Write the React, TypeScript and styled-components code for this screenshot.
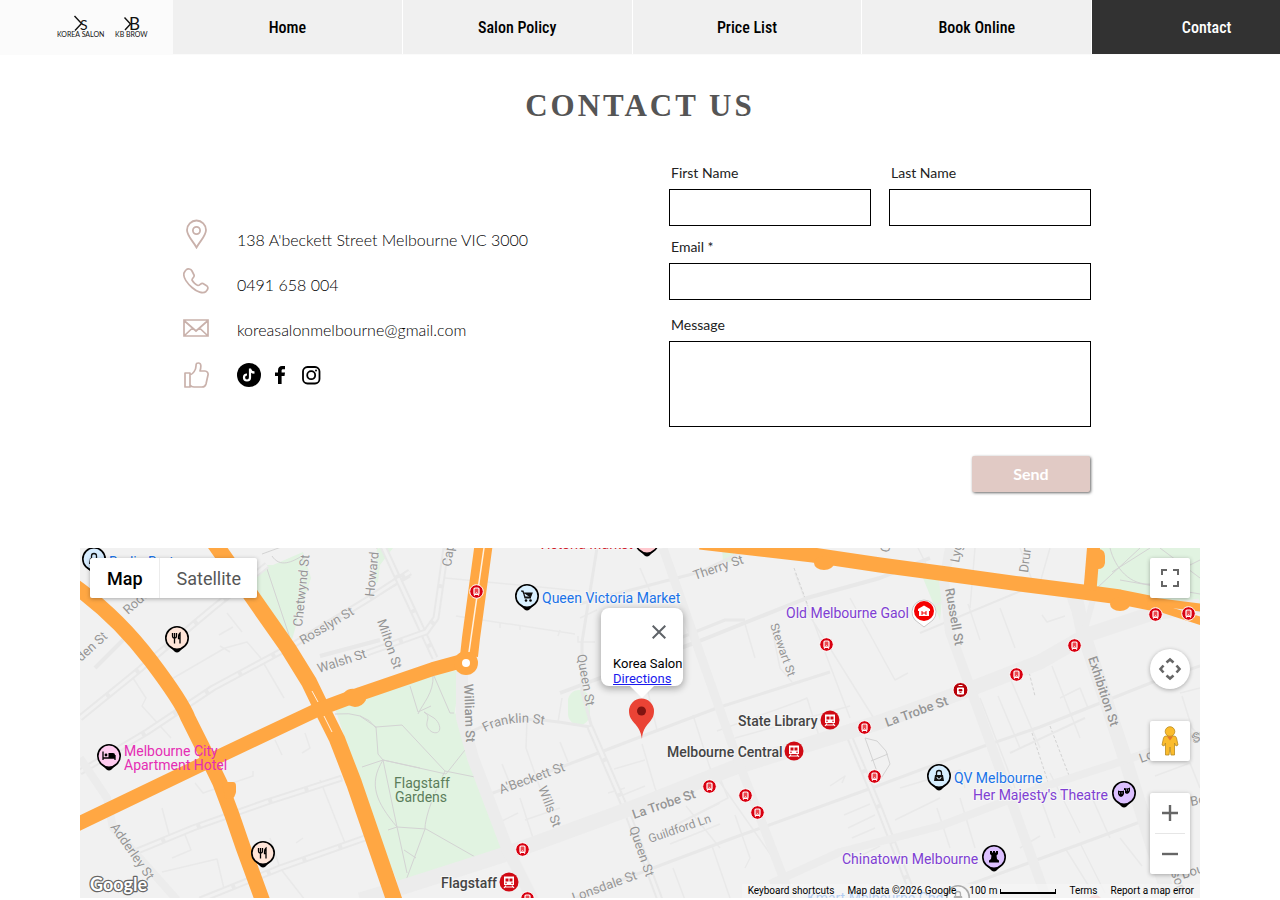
import React from "react";
import styled, { createGlobalStyle, css } from "styled-components";

const GlobalStyle = createGlobalStyle`
  * { box-sizing: border-box; }
  body { margin: 0; background: #fff; font-family: Lato, "Liberation Sans", sans-serif; }
`;

/* ---------- header ---------- */

const Header = styled.header`
  display: flex;
  height: 55px;
  overflow: hidden;
`;

const LogoLink = styled.a`
  flex: 0 0 173px;
  background: #fbfbfb;
`;

const Nav = styled.nav`
  flex: 1 1 0;
  min-width: 0;
  overflow: hidden;
  background: #fbfbfb;
`;

const NavList = styled.ul`
  display: flex;
  width: 100%;
  min-width: 1148px;
  margin: 0;
  padding: 0;
  list-style: none;
`;

const NavItem = styled.li`
  flex: 1 1 0;
  & + & { border-left: 1px solid #fff; }
`;

const NavLink = styled.a<{ $active?: boolean }>`
  display: flex;
  align-items: center;
  justify-content: center;
  height: 54px;
  font: 500 16px "Liberation Sans Narrow", "Roboto Condensed", Roboto, sans-serif;
  text-decoration: none;
  color: ${(p) => (p.$active ? "#fff" : "#000")};
  background: ${(p) => (p.$active ? "#323232" : "#f0f0f0")};
`;

/* ---------- contact section ---------- */

const Title = styled.h1`
  margin: 31px 0 0;
  text-align: center;
  font: 700 31px/40px "Liberation Serif", serif;
  letter-spacing: 3px;
  color: #555;
`;

const Contact = styled.section`
  display: flex;
  justify-content: space-between;
  gap: 40px;
  max-width: 980px;
  margin: 37px auto 0;
  padding: 0 39px 0 33px;
`;

const Details = styled.div`
  display: flex;
  gap: 28px;
`;

const IconColumn = styled.div`
  display: flex;
  flex-direction: column;
  width: 26px;
  padding-top: 47px;
`;

const IconSlot = styled.div`
  display: flex;
  align-items: center;
  justify-content: center;
  height: 47px;
`;

const TextColumn = styled.div`
  display: flex;
  flex-direction: column;
  padding-top: 54px;
`;

const TextSlot = styled.div`
  display: flex;
  align-items: center;
  gap: 7px;
  height: 45px;
  font-size: 16px;
  font-weight: 300;
  color: #000;
  white-space: nowrap;
`;

const MailLink = styled.a`
  color: inherit;
  text-decoration: none;
`;

const SocialLink = styled.a`
  display: block;
  width: 24px;
  height: 24px;
  color: #000;
`;

const Form = styled.form`
  display: flex;
  flex-direction: column;
  flex: 0 1 422px;
`;

const NameRow = styled.div`
  display: grid;
  grid-template-columns: 1fr 1fr;
  gap: 18px;
`;

const Field = styled.div<{ $gap?: number }>`
  display: flex;
  flex-direction: column;
  gap: 6px;
  margin-top: ${(p) => p.$gap ?? 0}px;
`;

const Label = styled.label`
  padding-left: 2px;
  font-size: 14px;
  line-height: 20px;
  color: #222;
`;

const control = css`
  width: 100%;
  padding: 4px 10px;
  border: 1px solid #000;
  border-radius: 0;
  background: #fff;
  font: 14px Lato, sans-serif;
`;

const Input = styled.input`
  ${control}
  height: 37px;
`;

const TextArea = styled.textarea`
  ${control}
  display: block;
  height: 86px;
  resize: none;
`;

const SendButton = styled.button`
  align-self: flex-end;
  width: 118px;
  height: 36px;
  margin: 29px 1px 0 0;
  padding: 0 0 2px;
  border: 0;
  border-radius: 2px;
  background: #e1cac5;
  box-shadow: 1px 1px 3px rgba(0, 0, 0, 0.6);
  color: #fff;
  font: 700 16px Lato, sans-serif;
`;

/* ---------- map ---------- */

const MapFrame = styled.section`
  position: relative;
  height: 350px;
  margin: 56px 80px 2px;
  overflow: hidden;
  background: #f1f1f1;
  font-family: Roboto, sans-serif;
`;

const MapCanvas = styled.svg`
  display: block;
  width: 100%;
  height: 100%;
  font-family: Roboto, sans-serif;
`;

const floating = css`
  border: 0;
  background: #fff;
  box-shadow: 0 1px 4px rgba(0, 0, 0, 0.3);
`;

const MapTypes = styled.div`
  ${floating}
  position: absolute;
  top: 10px;
  left: 10px;
  display: flex;
  border-radius: 2px;
`;

const TypeButton = styled.button<{ $active?: boolean }>`
  height: 40px;
  padding: 0 16px 0 17px;
  border: 0;
  background: transparent;
  font: ${(p) => (p.$active ? 500 : 400)} 18px Roboto, sans-serif;
  color: ${(p) => (p.$active ? "#000" : "#565656")};
  & + & { border-left: 1px solid #ececec; }
`;

const Controls = styled.div`
  position: absolute;
  top: 10px;
  right: 10px;
  display: flex;
  flex-direction: column;
  gap: 32px;
`;

const ControlButton = styled.button<{ $round?: boolean; $spaced?: boolean }>`
  ${floating}
  display: flex;
  align-items: center;
  justify-content: center;
  width: 40px;
  height: 40px;
  padding: 0;
  margin-top: ${(p) => (p.$spaced ? 19 : 0)}px;
  border-radius: ${(p) => (p.$round ? "50%" : "2px")};
`;

const ZoomGroup = styled.div`
  ${floating}
  display: flex;
  flex-direction: column;
  align-items: center;
  border-radius: 2px;
`;

const ZoomButton = styled.button`
  display: flex;
  align-items: center;
  justify-content: center;
  width: 40px;
  height: 40px;
  padding: 0;
  border: 0;
  background: transparent;
`;

const ZoomRule = styled.div`
  width: 30px;
  height: 1px;
  background: #e6e6e6;
`;

const InfoWindow = styled.div`
  position: absolute;
  top: 60px;
  left: calc(50% - 39px);
  width: 82px;
  height: 78px;
  border-radius: 8px;
  background: #fff;
  box-shadow: 0 2px 7px 1px rgba(0, 0, 0, 0.3);
  font-size: 13px;
  line-height: 15px;
  color: #000;
  white-space: nowrap;
  &::after {
    content: "";
    position: absolute;
    top: 100%;
    left: 29px;
    border: 12px solid transparent;
    border-top-color: #fff;
    border-bottom: 0;
  }
`;

const CloseButton = styled.button`
  display: flex;
  align-items: center;
  justify-content: center;
  width: 48px;
  height: 48px;
  margin-left: auto;
  padding: 0;
  border: 0;
  background: transparent;
`;

const InfoBody = styled.div`
  padding-left: 12px;
`;

const InfoLink = styled.a`
  color: #1a1aee;
`;

const Attribution = styled.div`
  position: absolute;
  right: 0;
  bottom: 0;
  display: flex;
  align-items: center;
  gap: 13px;
  height: 14px;
  padding: 0 6px;
  background: rgba(245, 245, 245, 0.7);
  font-size: 10px;
  line-height: 14px;
  color: #000;
`;

const AttributionButton = styled.button`
  display: flex;
  align-items: center;
  gap: 3px;
  padding: 0;
  border: 0;
  background: transparent;
  font: 10px/14px Roboto, sans-serif;
  color: #000;
`;

const AttributionLink = styled.a`
  color: #000;
  text-decoration: none;
`;

const ScaleBar = styled.span`
  width: 56px;
  height: 5px;
  border: 2px solid #000;
  border-width: 0 1px 2px;
`;

/* ---------- map data ---------- */

const parks = [
  "M255 160 280 152 353 127 380 122 375 164 387 197 397 230 424 300 320 340 305 304 280 237z",
  "M177 24 187 17 193 17 223 4 231 30 217 74 212 92 177 47z",
  "M297 0H313L300 17 298 34 294 36z",
  "M843 30 864 32 860 72z",
  "M642 0 655 3 652 14 643 14z",
  "M993 52 1000 54 998 67z",
  "M1015 44 1020 0H1120V56z",
];

const parkPaths = [
  "M330 138 338 164 351 158M353 127C354 145 343 155 338 166M354 128 370 165 374 165",
  "M280 168 296 179 322 177 365 223 395 229M282 219 303 212 366 226 385 202M296 179 298 206 303 212 340 220",
  "M303 212C288 236 296 254 317 279L308 282M365 223C352 250 345 270 345 281L325 335M303 212 317 279 346 281 397 310M317 279 327 325M324 302 336 310",
  "M344 164C354 170 340 176 352 184C362 188 362 176 354 170z",
  "M186 18 210 90M182 6 204 -2M192 8C200 20 212 14 222 8",
  "M255 166Q285 163 296 180",
  "M1017 40 1060 0M1030 0C1035 20 1050 38 1072 36L1120 12M1032 24 1070 0M1040 32 1120 46M1080 0 1120 30",
];

const wideRoads: [string, number][] = [
  ["M280 352 320 340 423 307 560 257 653 220 800 174 893 140 960 114 1007 87 1073 65 1120 58", 15],
  ["M382 124 382 170 393 210 427 300 453 352", 12],
  ["M870 0 864 33 870 84 910 194 967 352", 10],
  ["M996 50 1003 84 1043 204 1070 290 1090 352", 14],
  ["M583 0 617 97 657 210 712 352", 9],
  ["M0 210 27 250 33 280 97 352", 8],
  ["M690 336 760 304 860 278 960 240 1040 214 1120 186", 8],
  ["M988 44 1014 48 1003 88z", 6],
];

const doubleRoads = [
  "M0 170 53 127 133 60 187 17",
  "M0 224 67 184 133 140 213 97 290 50 330 24",
  "M50 306 113 280 187 254 262 230",
  "M120 352 200 320 285 290",
  "M302 -4 355 110",
  "M287 105 346 84 356 70 366 0",
  "M510 179 547 264 580 352",
  "M770 190 800 262 835 352",
];

const narrowRoads: [string, number][] = [
  ["M405 248 513 207 560 189 637 160 750 124", 3],
  ["M390 184C420 170 440 166 510 179", 3],
  ["M517 0 502 94 502 144 512 180", 3],
  ["M500 56 520 50 620 24 660 5", 3],
  ["M480 145 560 115 617 94 727 50 800 30 850 10", 4],
  ["M560 98 600 90 645 72 665 72", 3],
  ["M490 352 520 340 653 290 800 237 907 197 960 179 1073 134 1120 118", 3],
  ["M880 340 943 317 1060 274", 3],
  ["M240 108 300 92", 4],
  ["M15 120 45 90", 4],
  ["M275 60 330 28", 3],
  ["M840 85 960 35M960 35 1010 52", 2],
  ["M1005 170 930 205", 2],
];

const lanes = [
  "M53 130 66 150 62 158 91 190M147 65 162 84M139 87 153 79M90 132 145 100 167 94 180 109 204 150M150 104 140 98",
  "M82 260 90 290M104 284 111 302 92 310M82 324 137 311 145 345M195 192 202 207M225 185 230 200 222 205M115 235 123 245 173 228V223",
  "M240 232 265 295M216 295 223 290M190 290 200 320 225 352",
  "M365 30 470 40 500 43M376 68 495 86M420 75V80M440 77V82M480 82 478 88M498 88V94H515",
  "M447 172 446 200 460 240M482 150 478 174M480 194 488 214M422 216 430 236M440 250 453 290M445 272 480 260M438 265 420 274",
  "M560 20 575 55M500 70 517 62M560 110 577 182M534 221 565 212M562 196 575 240 585 262M543 247 565 238M528 245 545 240",
  "M613 167 630 220 700 320M637 183 720 153 727 150 739 188M665 76 675 110M691 76 700 120 712 134M655 190 770 158M595 277 648 250 640 230M580 285 640 255M590 296 640 276",
  "M606 258 640 300M655 267 670 310 665 320M632 298 650 350M593 320 605 352M740 190 800 170M715 25 770 170M726 62 800 180M770 50 815 132 828 125M838 0 848 20M850 60 870 50",
  "M750 238 765 228 762 235M764 267 790 256M768 280 795 267M772 290 795 280M776 310 800 298M820 240 880 222 885 240M815 272 860 250M857 260 870 300M880 250 895 300",
  "M888 56 900 92M895 0 890 60M920 60 935 100M900 150 935 240M918 148 940 200M930 130 960 200M955 40 940 0M970 0 960 35",
  "M972 118 1000 190M980 150 1000 140 1008 160M962 67 967 74 985 68M955 235 975 290M970 225 1000 285M985 300 1010 340M1000 295 1025 345M1010 245 1030 290M1040 290 1062 318M1075 228 1110 215 1120 240M1100 145 1120 140M1102 148 1112 180 1120 188M940 300 960 288",
];

const dashedPaths = [
  "M952 185 970 240M970 178 990 230M948 120 955 148",
  "M714 20 728 58",
];

const arterials: [string, number][] = [
  ["M-8 36 0 42Q40 72 71 113T108 170L124 202 140 235 152 267 163 299 186 362", 15],
  ["M128 -14 173 50 208 100 229 134 243 163 257 191 274 235 317 360", 16],
  ["M-4 277 127 214 237 162 280 146 353 121 386 112", 14],
  ["M389 108 391 90 404 -6", 18],
  ["M620 -6 733 7 800 17 867 26 940 36 1003 44 1040 49 1075 56", 15],
  ["M1068 53 1124 60", 8],
  ["M1068 56 1124 74", 8],
  ["M1010 42 1014 -6", 13],
];

type Street = [text: string, x: number, y: number, angle: number, size: number, weight?: number];

const streets: Street[] = [
  ["Roden St", 48, 67, -42, 13],
  ["den St", 1, 114, -42, 13],
  ["Chetwynd St", 222, 79, -84, 13],
  ["Howard St", 294, 49, -84, 13],
  ["Rosslyn St", 223, 97, -31, 13],
  ["Walsh St", 239, 125, -18, 13],
  ["Milton St", 297, 73, 71, 13],
  ["Capel St", 371, 19, -82, 13],
  ["William St", 384, 136, 88, 13, 500],
  ["Queen St", 497, 107, 80, 13],
  ["A'Beckett St", 421, 246, -20, 13],
  ["Wills St", 458, 240, 69, 13],
  ["Therry St", 615, 32, -19, 13],
  ["Stewart St", 690, 77, 71, 12],
  ["La Trobe St", 554, 271, -19, 13, 500],
  ["Guildford Ln", 570, 295, -19, 12],
  ["Queen St", 549, 280, 71, 13],
  ["Lonsdale St", 494, 354, -20, 13],
  ["Russell St", 865, 41, 80, 13, 500],
  ["Lygon St", 879, 15, -80, 13],
  ["Drummond St", 948, 25, -83, 13],
  ["Cardigan St", 809, 5, -80, 13],
  ["La Trobe St", 807, 179, -20, 13, 500],
  ["Exhibition St", 1008, 110, 72, 13, 500],
  ["Lonsdale St", 1061, 215, -20, 13],
  ["St", 1113, 194, -6, 13],
  ["Bourke", 1111, 258, -10, 13],
  ["Bourke", 1103, 331, -18, 13],
  ["Swanson", 1080, 295, 70, 13],
  ["Adderley St", 30, 279, 55, 13],
];

type Place = [text: string, x: number, y: number, fill: string, weight?: number];

const BLUE = "#1a73e8";
const PURPLE = "#7f3fd3";
const DARK = "#444";
const PINK = "#e52db4";

const places: Place[] = [
  ["Berlin Bart", 29, 19, BLUE],
  ["Victoria Market", 458, 1, "#d0202a"],
  ["Queen Victoria Market", 462, 55, BLUE],
  ["Old Melbourne Gaol", 706, 70, PURPLE],
  ["State Library", 658, 178, DARK, 500],
  ["Melbourne Central", 587, 209, DARK, 500],
  ["Flagstaff", 361, 340, DARK, 500],
  ["QV Melbourne", 874, 235, BLUE],
  ["Her Majesty's Theatre", 893, 252, PURPLE],
  ["Chinatown Melbourne", 762, 316, PURPLE],
];

const hotelLines: Place[] = [
  ["Melbourne City", 44, 208, PINK],
  ["Apartment Hotel", 44, 222, PINK],
];

const tramStops = [
  [396, 43], [442, 301], [447, 350], [746, 96], [784, 179], [794, 228], [629, 238],
  [665, 247], [677, 264], [936, 126], [994, 97], [1075, 66], [1108, 65],
];

const stations = [[429, 334], [750, 172], [714, 203]];

const glyphs: Record<string, React.ReactNode> = {
  fork: (
    <path d="M-4.500 -5V-2Q-4.500 0 -2.500 0V5.500M-2.500 -5V0M-.5 -5V-2Q-.5 0 -2.500 0M3 5.500V-5Q1.500 -4 1.500 -1V.5H3" fill="none" stroke="#000" strokeWidth="1.300" />
  ),
  bed: (
    <g>
      <path d="M-6-4.500V4M-6 2H6V4M6 2V-1" stroke="#000" strokeWidth="1.300" fill="none" />
      <path d="M-.5-3H4Q6-3 6-1V2H-.5z" />
      <circle cx="-3" cy="-1" r="1.400" />
    </g>
  ),
  cart: (
    <g>
      <path d="M-6-5H-4L-2 2H4M-3.500-3H5L3.500 1H-2z" fill="#111" stroke="#111" strokeWidth="1.200" />
      <circle cx="-1" cy="4.500" r="1.300" /><circle cx="3.500" cy="4.500" r="1.300" />
    </g>
  ),
  bag: (
    <g>
      <path d="M-4-1H4L5 5H-5z" fill="#111" />
      <path d="M-2.500-1V-3A2.500 2.500 0 0 1 2.500-3V-1" fill="none" stroke="#111" strokeWidth="1.300" />
      <path d="M-2 1A2 2 0 0 0 2 1" fill="none" stroke="#dff1ff" strokeWidth="1" />
    </g>
  ),
  rook: <path d="M-4-6H-2V-4.500H-1V-6H1V-4.500H2V-6H4V-3L2.500-1.500 3 2 5 3.500V5.500H-5V3.500L-3 2-2.500-1.500-4-3z" />,
  masks: (
    <g>
      <path d="M-6-2.500Q-3-1.500 0-2.500V1Q-1 4-3 4Q-5 4-6 1z" />
      <path d="M0-5Q3-4 6-5.500V-2Q5 1 3 1L1 0 1-3H0z" />
      <path d="M-5 0H-4M-2.500 0H-1.500M2-3H3M4-3H5" stroke="#dcc0ff" />
    </g>
  ),
};

const Pin = ({ x, y, fill, glyph, opacity = 1 }: { x: number; y: number; fill: string; glyph?: string; opacity?: number }) => (
  <g transform={`translate(${x} ${y})`} opacity={opacity}>
    <path d="M-9 7 -2.500 13.500Q0 15.500 2.500 13.500L9 7z" />
    <circle r="11.200" fill={fill} stroke="#000" strokeWidth="1.600" />
    {glyph && glyphs[glyph]}
  </g>
);

const Tram = ({ x, y }: { x: number; y: number }) => (
  <g transform={`translate(${x + 0.5} ${y + 0.5})`}>
    <circle r="6.800" fill="#d80010" stroke="#fff" />
    <rect x="-2.500" y="-3.500" width="5" height="6.500" rx="1" fill="#ec4a50" stroke="#fff" strokeWidth="1.200" />
    <path d="M-2.500 4.500 0 1 2.500 4.500" stroke="#fff" fill="none" strokeWidth=".8" />
  </g>
);

const Station = ({ x, y }: { x: number; y: number }) => (
  <g transform={`translate(${x} ${y})`}>
    <circle r="9.500" fill="#d00a14" />
    <path d="M-5-5.500H5V3H-5z" fill="#fff" />
    <path d="M-3.500-3.500H-.5V-.5H-3.500zM.5-3.500H3.500V-.5H.5z" fill="#d00a14" />
    <circle cx="-3" cy="1.200" r=".8" fill="#d00a14" /><circle cx="3" cy="1.200" r=".8" fill="#d00a14" />
    <path d="M-5 6 -3 3.500M5 6 3 3.500M-4 5H4" stroke="#fff" strokeWidth="1.200" />
  </g>
);

const MapDrawing = () => (
  <MapCanvas viewBox="0 0 1120 350" preserveAspectRatio="xMidYMid slice" role="img" aria-label="Map of Melbourne">
    <rect width="1120" height="350" fill="#f1f1f1" />
    <g fill="#e1f3e1">
      {parks.map((d) => <path key={d} d={d} />)}
      <rect x="488" y="142" width="22" height="35" rx="11" />
    </g>
    <g fill="none" stroke="#d3d3d3">
      {parkPaths.map((d) => <path key={d} d={d} />)}
      <path d="M785 190 797 193 806 203 810 216 800 232 785 190M791 213 808 206" />
    </g>
    <g fill="none" strokeLinejoin="round">
      {lanes.map((d) => <path key={d} d={d} stroke="#e9e9e9" strokeWidth="1.500" />)}
      {dashedPaths.map((d) => <path key={d} d={d} stroke="#d2d2d2" strokeDasharray="3 2" />)}
      {narrowRoads.map(([d, w]) => <path key={d} d={d} stroke="#e8e8e8" strokeWidth={w} />)}
      {doubleRoads.map((d) => (
        <g key={d}>
          <path d={d} stroke="#e8e8e8" strokeWidth="7" />
          <path d={d} stroke="#f1f1f1" strokeWidth="3" strokeDasharray="34 4" />
        </g>
      ))}
      {wideRoads.map(([d, w]) => <path key={d} d={d} stroke="#ececec" strokeWidth={w} />)}
      {arterials.map(([d, w]) => <path key={d} d={d} stroke="#ffa743" strokeWidth={w} />)}
    </g>
    <g fill="#ffa743">
      <path d="M142 234H153Q156 234 156 238V244Q155 249 152 251L145 250z" />
      <path d="M264 145Q268 140 275 141H283L286 152Q282 159 275 159 268 158 265 154z" />
      <ellipse cx="744" cy="15" rx="10" ry="7" />
      <ellipse cx="1040" cy="56" rx="10" ry="7" />
      <path d="M1012 1H1019Q1025 2 1025 8V15Q1024 21 1018 21H1012z" />
      <circle cx="386" cy="115" r="12" />
    </g>
    <circle cx="386" cy="115" r="4" fill="#fff" />
    <path d="M389 104 391 90 404 0" stroke="#fff1e0" strokeWidth="1.500" fill="none" />
    <path d="M232 143 238 154M244 168 252 184" stroke="#fff1e0" fill="none" />

    <g fill="#969696" stroke="#f3f3f3" strokeWidth="1" paintOrder="stroke">
      {streets.map(([text, x, y, angle, size, weight]) => (
        <text key={`${text}${x}`} transform={`translate(${x} ${y}) rotate(${angle})`} fontSize={size} fontWeight={weight ?? 400}>
          {text}
        </text>
      ))}
      <path id="franklin" d="M405 184Q432 169 470 178" fill="none" stroke="none" />
      <text fontSize="13"><textPath href="#franklin">Franklin St</textPath></text>
    </g>

    {tramStops.map(([x, y]) => <Tram key={`${x}-${y}`} x={x} y={y} />)}
    <g transform="translate(880.500 142)">
      <circle r="7.500" fill="#b80008" stroke="#fff" />
      <path d="M-3-2H3V4H-3zM-2-4.500H2" fill="#fff" stroke="#fff" />
      <path d="M-1.500-.5H1.500V1H-1.500zM-1 2.500H1" fill="#b80008" stroke="#b80008" strokeWidth=".8" />
    </g>
    <circle cx="1015" cy="354" r="7" fill="#f0a0a0" />
    {stations.map(([x, y]) => <Station key={`${x}-${y}`} x={x} y={y} />)}

    <g stroke="#f6f6f6" strokeWidth="2" paintOrder="stroke" fontSize="14">
      {places.map(([text, x, y, fill, weight]) => (
        <text key={text} x={x} y={y} fill={fill} fontWeight={weight ?? 400}>{text}</text>
      ))}
      <text x="727" y="355" fill={BLUE}>Kmart Melbourne Cbd</text>
      <g fill="#5b7d5b" stroke="#e1f3e1" textAnchor="middle">
        <text x="342" y="240">Flagstaff</text>
        <text x="341" y="254">Gardens</text>
      </g>
    </g>
    <g fontSize="14">
      {hotelLines.map(([text, x, y, fill]) => <text key={text} x={x} y={y} fill={fill}>{text}</text>)}
    </g>

    <Pin x={14} y={11} fill="#d6ecff" glyph="bag" />
    <Pin x={97} y={90} fill="#ffe5d8" glyph="fork" />
    <Pin x={29} y={208} fill="#ffccf0" glyph="bed" />
    <Pin x={183} y={305} fill="#ffe5d8" glyph="fork" />
    <Pin x={447} y={48} fill="#d9f0ff" glyph="cart" />
    <Pin x={567} y={-6} fill="#ffc9cf" />
    <Pin x={859} y={228} fill="#d6eeff" glyph="bag" />
    <Pin x={914} y={309} fill="#dcc0ff" glyph="rook" />
    <Pin x={1044} y={245} fill="#dcc0ff" glyph="masks" />
    <Pin x={878} y={349} fill="#fff" glyph="bag" />

    <g transform="translate(844 64)">
      <path d="M0 15 -9 8A12 12 0 1 1 9 8z" fill="#fff" stroke="#bbb" strokeWidth=".8" />
      <circle cy="-1" r="10" fill="#f40000" />
      <path d="M-6-3 0-6.500 6-3V-1H5V4H-5V-1H-6z" fill="#fff" />
      <path d="M-2-1V3M0 1H0M2-1V3M-2 1H2" stroke="#f40000" />
    </g>

    <path d="M562 191C560 175 549 175 549 163A12.500 12.500 0 0 1 574 163C574 175 563 175 562 191z" fill="#ea4335" />
    <circle cx="561.500" cy="163" r="4.500" fill="#811411" />

    <text x="10" y="343" fontFamily="Lato, sans-serif" fontSize="18" fontWeight="700" fill="#fff" stroke="#666" strokeWidth="2.500" strokeLinejoin="round" paintOrder="stroke">
      Google
    </text>
  </MapCanvas>
);

/* ---------- line icons ---------- */

const ROSE = "#c9b1ab";

const contactIcons = [
  <svg key="pin" width="24" height="30" viewBox="0 0 24 30" fill="none" stroke={ROSE} strokeWidth="1.800">
    <path d="M12.500 28.500C9 22 3 17 3 11A9.500 9.500 0 0 1 22 11C22 17 16 22 12.500 28.500z" /><circle cx="12.500" cy="11.500" r="3.600" />
  </svg>,
  <svg key="phone" width="26" height="26" viewBox="0 0 26 26" fill="none" stroke={ROSE} strokeWidth="1.700" strokeLinejoin="round">
    <path d="M3 2C5 0 8 1 9 3L11 7C12 9 9 10 9 12C10 14 13 17 15 17.500C17 17.500 18 14.500 20 15.500L24 18C26 20 24.500 22 23 23.500C20 26 14 24 9 19.500C4 15 0 9 1 5C1.500 4 2 3 3 2z" />
  </svg>,
  <svg key="mail" width="26" height="18" viewBox="0 0 26 18" fill="none" stroke={ROSE} strokeWidth="1.700">
    <path d="M1 1H25V17H1zM1 1.500 13 12 25 1.500M1 17 9.500 9M25 17 16.500 9" />
  </svg>,
  <svg key="like" width="26" height="26" viewBox="0 0 26 26" fill="none" stroke={ROSE} strokeWidth="1.700" strokeLinejoin="round">
    <path d="M2 11H7V25H2zM7 13C10 12 13 8 13 4C13 1 14 1 15.500 1C18 1 18.500 4 17 9H22C24 9 25.500 11 25 13L23 22C22.500 24 21 25 19 25H11Q8 25 7 23" />
  </svg>,
];

const Logo = () => (
  <svg width="173" height="55" viewBox="0 0 173 55" fill="#111" fontFamily="Lato, sans-serif">
    <path d="M74.500 16 81.500 23.500 75 30.500M124.500 17.500 130.500 24 125 30" stroke="#111" strokeWidth="1.400" fill="none" />
    <text x="80" y="30" fontSize="14">S</text>
    <text x="129" y="30" fontSize="17">B</text>
    <text x="57" y="37" fontSize="7">KOREA SALON</text>
    <text x="115" y="37" fontSize="7">KB BROW</text>
  </svg>
);

const navItems = ["Home", "Salon Policy", "Price List", "Book Online", "Contact"];

export default function App() {
  return (
    <>
      <GlobalStyle />
      <Header>
        <LogoLink href="#" aria-label="Korea Salon"><Logo /></LogoLink>
        <Nav>
          <NavList>
            {navItems.map((name) => (
              <NavItem key={name}><NavLink href="#" $active={name === "Contact"}>{name}</NavLink></NavItem>
            ))}
          </NavList>
        </Nav>
      </Header>

      <main>
        <Title>CONTACT US</Title>
        <Contact>
          <Details>
            <IconColumn>
              {contactIcons.map((icon) => <IconSlot key={icon.key}>{icon}</IconSlot>)}
            </IconColumn>
            <TextColumn>
              <TextSlot>138 A'beckett Street Melbourne VIC 3000</TextSlot>
              <TextSlot>0491 658 004</TextSlot>
              <TextSlot><MailLink href="mailto:koreasalonmelbourne@gmail.com">koreasalonmelbourne@gmail.com</MailLink></TextSlot>
              <TextSlot>
                <SocialLink href="#" aria-label="TikTok">
                  <svg width="24" height="24" viewBox="0 0 24 24">
                    <circle cx="12" cy="12" r="12" />
                    <path d="M13 5.500V14.500A3 3 0 1 1 10 11.500M13 6C13.500 8.500 15 9.500 17.500 9.700" fill="none" stroke="#fff" strokeWidth="2.200" />
                  </svg>
                </SocialLink>
                <SocialLink href="#" aria-label="Facebook">
                  <svg width="24" height="24" viewBox="0 0 24 24">
                    <path d="M10 21V13H7V9.500H10V7.500C10 4.500 11.500 3 14 3H17V6.300H15C14 6.300 13.600 6.800 13.600 7.800V9.500H17L16.500 13H13.600V21z" />
                  </svg>
                </SocialLink>
                <SocialLink href="#" aria-label="Instagram">
                  <svg width="24" height="24" viewBox="0 0 24 24" fill="none" stroke="#000" strokeWidth="1.800">
                    <rect x="4" y="4" width="16.500" height="16.500" rx="4.500" /><circle cx="12.200" cy="12.200" r="4" />
                    <circle cx="17" cy="7.500" r="1" fill="#000" stroke="none" />
                  </svg>
                </SocialLink>
              </TextSlot>
            </TextColumn>
          </Details>

          <Form onSubmit={(e) => e.preventDefault()}>
            <NameRow>
              <Field><Label htmlFor="first">First Name</Label><Input id="first" /></Field>
              <Field><Label htmlFor="last">Last Name</Label><Input id="last" /></Field>
            </NameRow>
            <Field $gap={11}><Label htmlFor="email">Email *</Label><Input id="email" type="email" /></Field>
            <Field $gap={15}><Label htmlFor="message">Message</Label><TextArea id="message" /></Field>
            <SendButton type="submit">Send</SendButton>
          </Form>
        </Contact>

        <MapFrame>
          <MapDrawing />
          <InfoWindow>
            <CloseButton aria-label="Close">
              <svg width="14" height="14" viewBox="0 0 14 14" stroke="#5f6368" strokeWidth="2"><path d="M.7.7 13.300 13.300M13.300.7.7 13.300" /></svg>
            </CloseButton>
            <InfoBody>Korea Salon<br /><InfoLink href="#">Directions</InfoLink></InfoBody>
          </InfoWindow>
          <MapTypes>
            <TypeButton $active>Map</TypeButton>
            <TypeButton>Satellite</TypeButton>
          </MapTypes>
          <Controls>
            <ControlButton aria-label="Toggle fullscreen">
              <svg width="18" height="18" viewBox="0 0 18 18" fill="none" stroke="#666" strokeWidth="2"><path d="M1 6V1H6M12 1H17V6M17 12V17H12M6 17H1V12" /></svg>
            </ControlButton>
            <ControlButton $round $spaced aria-label="Map camera controls">
              <svg width="24" height="24" viewBox="0 0 24 24" fill="none" stroke="#666" strokeWidth="2.600"><path d="M8.500 5.500 12 2.500 15.500 5.500M8.500 18.500 12 21.500 15.500 18.500M5.500 8.500 2.500 12 5.500 15.500M18.500 8.500 21.500 12 18.500 15.500" /></svg>
            </ControlButton>
            <ControlButton aria-label="Street View Pegman">
              <svg width="18" height="30" viewBox="0 0 18 30" fill="#fbbc2c" stroke="#b98a20" strokeWidth=".8">
                <path d="M5 10H13Q15 10 15.500 12L17 19 15 20 13.500 17V29H10L9 21 8 29H4.500V17L3 20 1 19 2.500 12Q3 10 5 10z" />
                <circle cx="9" cy="5.500" r="4.800" /><path d="M6 10.500H12L9 14.500z" fill="#e3762b" stroke="none" />
              </svg>
            </ControlButton>
            <ZoomGroup>
              <ZoomButton aria-label="Zoom in">
                <svg width="16" height="16" viewBox="0 0 16 16" stroke="#666" strokeWidth="2.400"><path d="M0 8H16M8 0V16" /></svg>
              </ZoomButton>
              <ZoomRule />
              <ZoomButton aria-label="Zoom out">
                <svg width="16" height="16" viewBox="0 0 16 16" stroke="#666" strokeWidth="2.400"><path d="M0 8H16" /></svg>
              </ZoomButton>
            </ZoomGroup>
          </Controls>
          <Attribution>
            <AttributionButton>Keyboard shortcuts</AttributionButton>
            <span>Map data ©2026 Google</span>
            <AttributionButton>100 m <ScaleBar /></AttributionButton>
            <AttributionLink href="#">Terms</AttributionLink>
            <AttributionLink href="#">Report a map error</AttributionLink>
          </Attribution>
        </MapFrame>
      </main>
    </>
  );
}
